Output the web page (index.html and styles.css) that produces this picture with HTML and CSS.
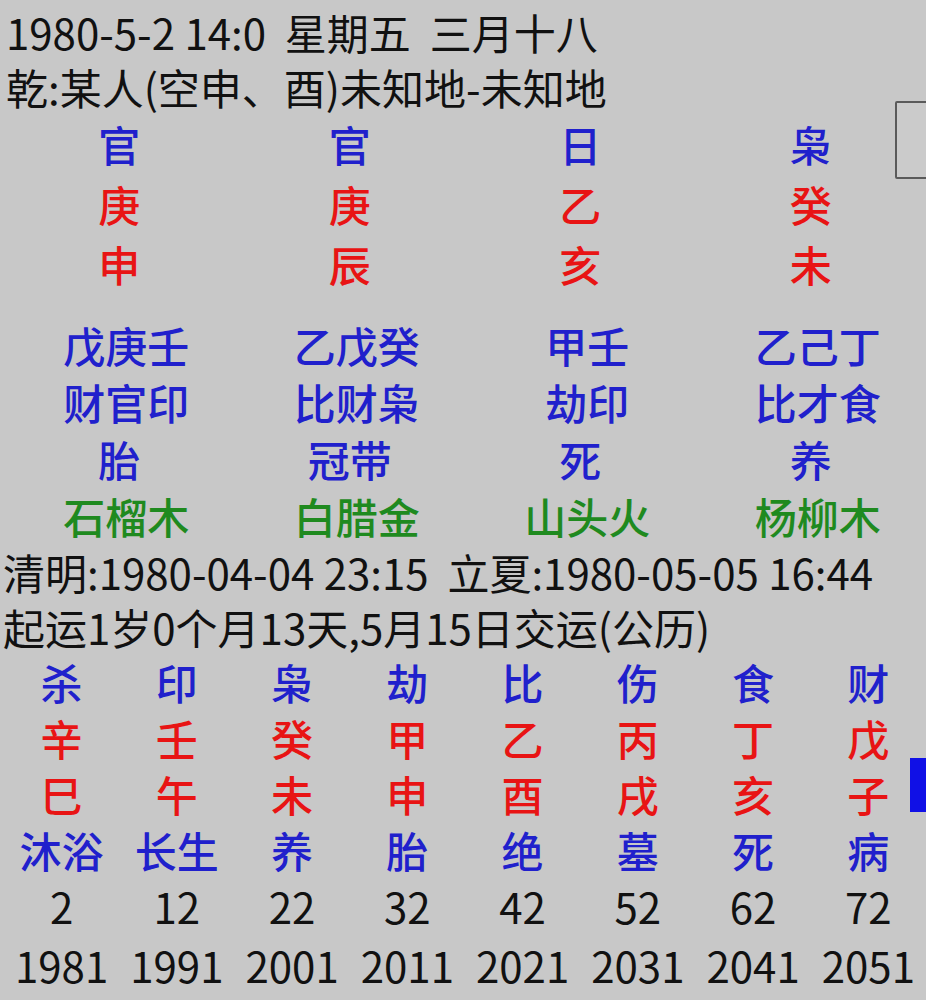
FILE: index.html
```html
<!DOCTYPE html>
<html lang="zh-CN">
<head>
<meta charset="utf-8">
<title>排盘</title>
<link rel="stylesheet" href="styles.css">
</head>
<body>
<div class="page">
  <div class="head">
    <div class="line">1980-5-2 14:0  星期五  三月十八</div>
    <div class="line">乾:某人(空申、酉)未知地-未知地</div>
  </div>

  <div class="chart">
    <div class="grid4 pillars">
      <div class="blue">官</div><div class="blue">官</div><div class="blue">日</div><div class="blue">枭</div>
      <div class="red">庚</div><div class="red">庚</div><div class="red">乙</div><div class="red">癸</div>
      <div class="red">申</div><div class="red">辰</div><div class="red">亥</div><div class="red">未</div>
    </div>
    <div class="grid4 hidden">
      <div class="blue shift">戊庚壬</div><div class="blue shift">乙戊癸</div><div class="blue shift">甲壬</div><div class="blue shift">乙己丁</div>
      <div class="blue shift">财官印</div><div class="blue shift">比财枭</div><div class="blue shift">劫印</div><div class="blue shift">比才食</div>
      <div class="blue">胎</div><div class="blue">冠带</div><div class="blue">死</div><div class="blue">养</div>
      <div class="green shift">石榴木</div><div class="green shift">白腊金</div><div class="green shift">山头火</div><div class="green shift">杨柳木</div>
    </div>
  </div>

  <div class="info">
    <div class="line">清明:1980-04-04 23:15  立夏:1980-05-05 16:44</div>
    <div class="line">起运1岁0个月13天,5月15日交运(公历)</div>
  </div>

  <div class="grid8 luck">
    <div class="blue">杀</div><div class="blue">印</div><div class="blue">枭</div><div class="blue">劫</div><div class="blue">比</div><div class="blue">伤</div><div class="blue">食</div><div class="blue">财</div>
    <div class="red">辛</div><div class="red">壬</div><div class="red">癸</div><div class="red">甲</div><div class="red">乙</div><div class="red">丙</div><div class="red">丁</div><div class="red">戊</div>
    <div class="red">巳</div><div class="red">午</div><div class="red">未</div><div class="red">申</div><div class="red">酉</div><div class="red">戌</div><div class="red">亥</div><div class="red">子</div>
    <div class="blue">沐浴</div><div class="blue">长生</div><div class="blue">养</div><div class="blue">胎</div><div class="blue">绝</div><div class="blue">墓</div><div class="blue">死</div><div class="blue">病</div>
    <div class="black">2</div><div class="black">12</div><div class="black">22</div><div class="black">32</div><div class="black">42</div><div class="black">52</div><div class="black">62</div><div class="black">72</div>
    <div class="black">1981</div><div class="black">1991</div><div class="black">2001</div><div class="black">2011</div><div class="black">2021</div><div class="black">2031</div><div class="black">2041</div><div class="black">2051</div>
  </div>

  <div class="scroll-box"></div>
  <div class="scroll-mark"></div>
</div>
</body>
</html>
```

FILE: styles.css
```css
html, body {
  margin: 0;
  padding: 0;
  background: #c8c8c8;
}
body {
  font-family: "Noto Sans CJK SC", sans-serif;
  font-size: 42px;
  font-weight: 400;
  color: #111;
  overflow: hidden;
}
.page {
  position: relative;
  width: 926px;
  height: 1000px;
  padding-top: 4px;
  box-sizing: border-box;
}
.head {
  padding-left: 6px;
}
.line {
  white-space: pre;
  line-height: 55px;
  height: 55px;
}
.grid4 {
  display: grid;
  grid-template-columns: repeat(4, 1fr);
  padding-left: 4px;
  text-align: center;
}
.pillars > div {
  line-height: 60px;
  height: 60px;
}
.hidden {
  padding-top: 22px;
}
.hidden > div {
  line-height: 57px;
  height: 57px;
}
.shift {
  position: relative;
  left: 7px;
}
.info {
  padding-left: 3px;
}
.grid8 {
  display: grid;
  grid-template-columns: repeat(8, 1fr);
  padding-left: 4px;
  text-align: center;
}
.luck > div {
  line-height: 56px;
  height: 56px;
  white-space: nowrap;
}
.luck > div:nth-last-child(-n+8) {
  line-height: 58px;
  height: 58px;
  padding-top: 2px;
}
.blue { color: #2020cc; font-weight: 500; }
.red { color: #e81414; font-weight: 500; }
.green { color: #1f8a1f; font-weight: 500; }
.black { color: #111; }

.scroll-box {
  position: absolute;
  left: 895px;
  top: 101px;
  width: 40px;
  height: 74px;
  border: 2px solid #5a5a5a;
  border-radius: 2px;
  background: #cbcbcb;
}
.scroll-mark {
  position: absolute;
  left: 910px;
  top: 758px;
  width: 16px;
  height: 54px;
  background: #1010e6;
}
```
